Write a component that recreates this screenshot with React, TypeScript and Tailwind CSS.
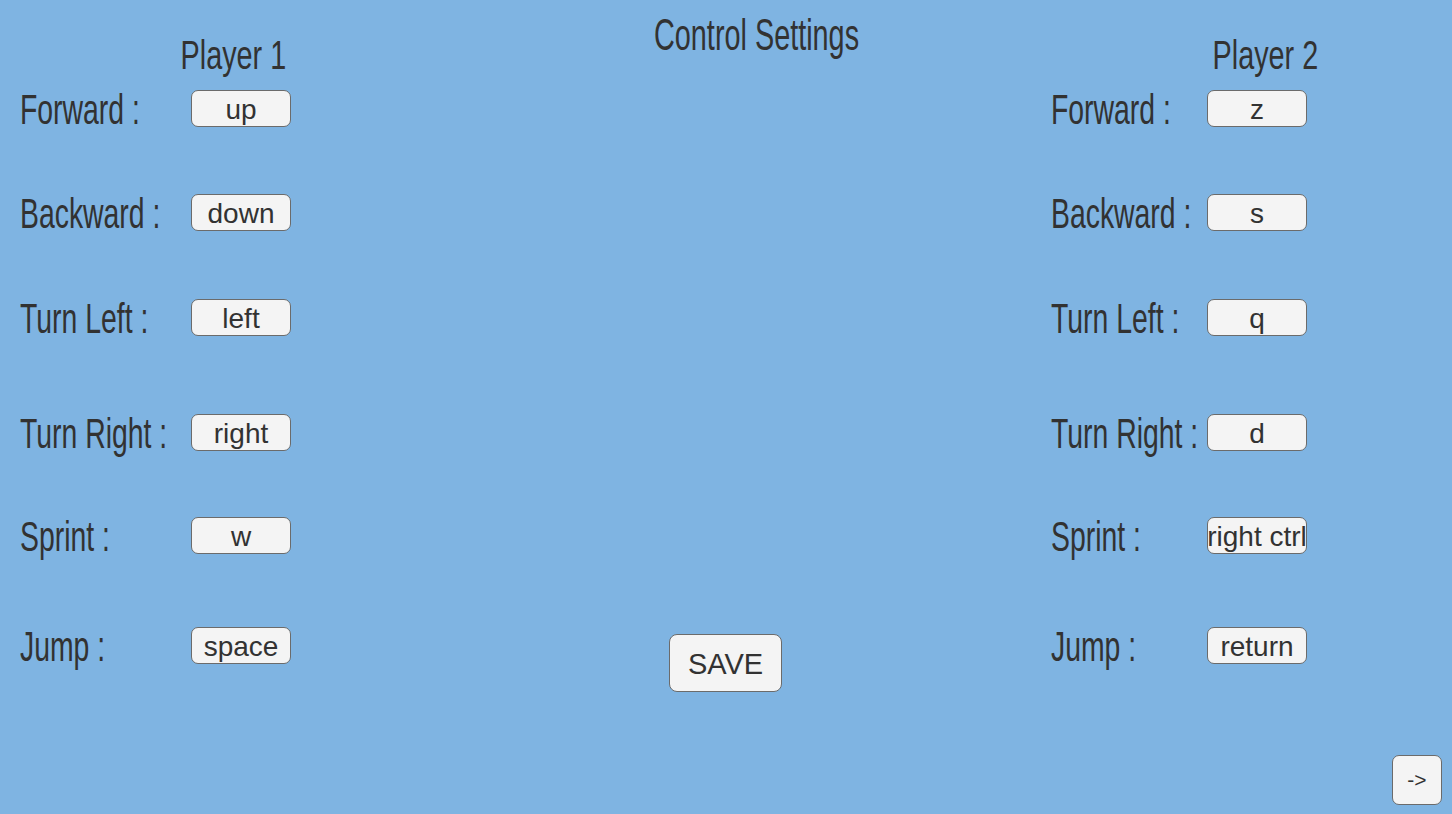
const rows = [
	{ label: "Forward :", p1: "up", p2: "z", h: "h-[104px]" },
	{ label: "Backward :", p1: "down", p2: "s", h: "h-[105px]" },
	{ label: "Turn Left :", p1: "left", p2: "q", h: "h-[115px]" },
	{ label: "Turn Right :", p1: "right", p2: "d", h: "h-[103px]" },
	{ label: "Sprint :", p1: "w", p2: "right ctrl", h: "h-[110px]" },
	{ label: "Jump :", p1: "space", p2: "return", h: "h-[37px]" },
];

const KeyButton = ({ value }: { value: string }) => (
	<button className="flex h-[37px] w-[100px] shrink-0 items-center justify-center overflow-hidden whitespace-nowrap rounded-[7px] border border-[#6b6b6b] bg-[#f4f4f4] pt-[3px] text-[28px] leading-[32px] text-[#323232]">
		{value}
	</button>
);

const PlayerColumn = ({ title, player, labelWidth, headingOffset }: { title: string; player: "p1" | "p2"; labelWidth: string; headingOffset: string }) => (
	<div className="flex flex-col">
		<div className={`mt-[35px] flex h-[40px] w-[200px] justify-center ${headingOffset}`}>
			<span className="inline-block scale-x-[0.72] whitespace-nowrap text-[40px] leading-[40px]">{title}</span>
		</div>
		<div className="mt-[15px] flex flex-col">
			{rows.map((row) => (
				<div key={row.label} className={`flex items-start ${row.h}`}>
					<div className={`shrink-0 whitespace-nowrap ${labelWidth}`}>
						<span className="inline-block origin-left scale-x-[0.66] pt-[1px] text-[43px] leading-[37px]">{row.label}</span>
					</div>
					<KeyButton value={row[player]} />
				</div>
			))}
		</div>
	</div>
);

export default function App() {
	return (
		<div className="flex h-[814px] w-full overflow-hidden bg-[#7fb4e2] font-['Liberation_Sans',Arial,sans-serif] text-[#323232]">
			<div className="w-[291px] shrink-0 pl-5">
				<PlayerColumn title="Player 1" player="p1" labelWidth="w-[171px]" headingOffset="ml-[113px]" />
			</div>

			<div className="flex w-[760px] shrink-0 flex-col">
				<div className="mt-[13px] flex justify-center pl-[172px]">
					<h1 className="inline-block scale-x-[0.655] whitespace-nowrap text-[44px] font-normal leading-[44px]">Control Settings</h1>
				</div>
				<div className="mt-[577px] flex justify-center pl-[109px]">
					<button className="flex h-[58px] w-[113px] items-center justify-center rounded-[8px] border border-[#6b6b6b] bg-[#f4f4f4] pt-[3px] text-[29px] text-[#323232]">
						SAVE
					</button>
				</div>
			</div>

			<div className="w-[267px] shrink-0">
				<PlayerColumn title="Player 2" player="p2" labelWidth="w-[156px]" headingOffset="ml-[114px]" />
			</div>

			<div className="flex flex-1 items-end justify-end pb-[9px] pr-[10px]">
				<button className="flex h-[50px] w-[50px] items-center justify-center rounded-[7px] border border-[#6b6b6b] bg-[#f4f4f4] text-[21px] text-[#323232]">
					-&gt;
				</button>
			</div>
		</div>
	);
}
